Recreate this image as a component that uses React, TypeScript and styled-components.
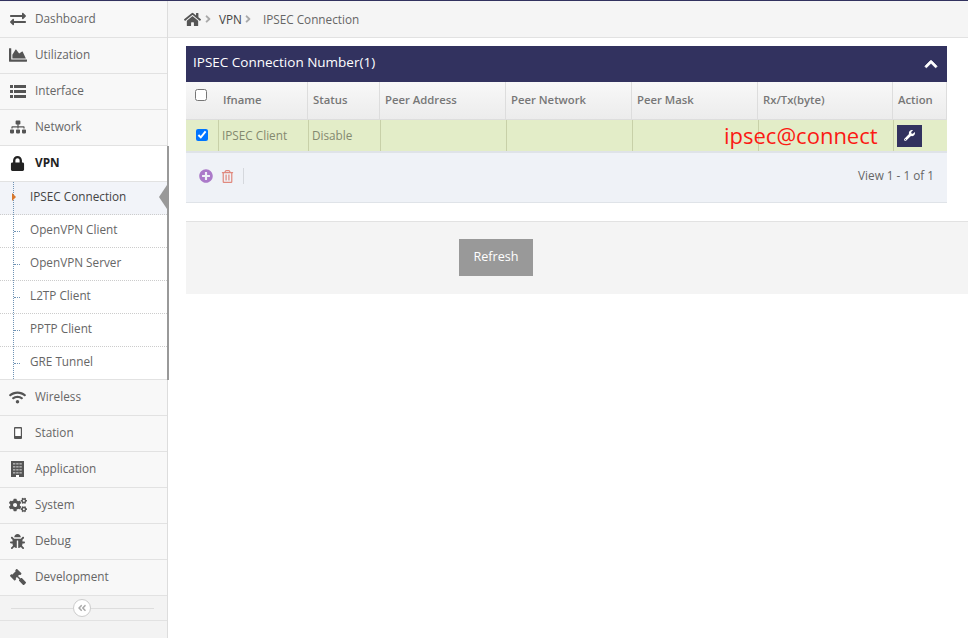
import React from "react";
import styled, { createGlobalStyle } from "styled-components";
import {
  FaExchangeAlt, FaChartArea, FaSitemap, FaLock, FaWifi,
  FaCogs, FaBug, FaGavel, FaHome, FaChevronUp, FaPlusCircle, FaRegTrashAlt, FaWrench,
  FaAngleDoubleLeft, FaAngleRight,
} from "react-icons/fa";

const GlobalStyle = createGlobalStyle`
  html, body { margin: 0; padding: 0; height: 100%; background: #fff; }
  body { font-family: "Open Sans", "Liberation Sans", sans-serif; font-size: 11.75px; color: #555; overflow: hidden; }
`;

const Page = styled.div`
  display: flex;
  height: 638px;
  border-top: 1px solid #32325f;
  box-sizing: border-box;
`;

const Sidebar = styled.aside`
  width: 168px;
  flex: none;
  padding-top: 1px;
  background: #f3f3f3;
  border-right: 1px solid #ddd;
  box-sizing: border-box;
`;

const NavItem = styled.div<{ $active?: boolean }>`
  display: flex;
  align-items: center;
  height: 36px;
  box-sizing: border-box;
  border-bottom: 1px solid #e2e2e2;
  padding-bottom: 3px;
  background: ${(p) => (p.$active ? "#fff" : "#f8f8f8")};
  color: ${(p) => (p.$active ? "#222" : "#666")};
  font-weight: ${(p) => (p.$active ? 700 : 400)};
`;

const NavIcon = styled.span<{ $active?: boolean; $size?: number }>`
  width: 35px;
  flex: none;
  display: flex;
  justify-content: center;
  margin-top: 2px;
  font-size: ${(p) => p.$size ?? 16}px;
  color: ${(p) => (p.$active ? "#222" : "#555")};
`;

const GavelIcon = styled(FaGavel)`
  transform: scaleX(-1);
`;

const VpnGroup = styled.div`
  margin-right: -2px;
  border-right: 2px solid #999;
  position: relative;
  z-index: 1;
`;

const SubMenu = styled.div`
  position: relative;
  border-bottom: 1px solid #e2e2e2;
  &::before {
    content: "";
    position: absolute;
    z-index: 1;
    left: 13px;
    top: 0;
    bottom: 0;
    border-left: 1px dotted #6f93b5;
  }
`;

const SubItem = styled.div<{ $active?: boolean }>`
  position: relative;
  height: 33px;
  box-sizing: border-box;
  display: flex;
  align-items: center;
  padding: 0 0 4px 30px;
  border-bottom: 1px dotted #ccc;
  background: ${(p) => (p.$active ? "#f2f4f9" : "#fff")};
  color: ${(p) => (p.$active ? "#444" : "#666")};
  &:last-child { border-bottom: 0; height: 32px; }
  &::before {
    content: "";
    position: absolute;
    left: 14px;
    top: 50%;
    width: 6px;
    border-top: 1px dotted #6f93b5;
    display: ${(p) => (p.$active ? "none" : "block")};
  }
`;

const ActiveCaret = styled.span`
  position: absolute;
  z-index: 2;
  left: 12px;
  top: 11px;
  border-left: 4px solid #d9782d;
  border-top: 4px solid transparent;
  border-bottom: 4px solid transparent;
`;

const ActiveNotch = styled.span`
  position: absolute;
  right: 0;
  top: 3px;
  border-right: 8px solid #999;
  border-top: 12px solid transparent;
  border-bottom: 12px solid transparent;
`;

const CollapseBar = styled.div`
  height: 25px;
  box-sizing: border-box;
  border-bottom: 1px solid #e2e2e2;
  display: flex;
  align-items: center;
  justify-content: center;
  padding: 0 13px 0 11px;
  background: #f3f3f3;
  &::before, &::after {
    content: "";
    flex: 1;
    border-top: 1px solid #ddd;
  }
  &::before { flex: 0 0 62px; }
`;

const CollapseButton = styled.span`
  width: 16px;
  height: 16px;
  border: 1px solid #ccc;
  border-radius: 50%;
  background: #fff;
  color: #aaa;
  font-size: 10px;
  display: flex;
  align-items: center;
  justify-content: center;
`;

const Main = styled.main`
  flex: 1;
  min-width: 0;
`;

const Breadcrumb = styled.div`
  height: 37px;
  box-sizing: border-box;
  background: #f5f5f5;
  border-bottom: 1px solid #e2e2e2;
  display: flex;
  align-items: center;
  padding: 0 0 0 16px;
  color: #666;
`;

const HomeIcon = styled(FaHome)`
  font-size: 17px;
  color: #555;
`;

const Crumb = styled.span<{ $strong?: boolean }>`
  color: ${(p) => (p.$strong ? "#444" : "#666")};
`;

const CrumbSep = styled(FaAngleRight)<{ $wide?: boolean }>`
  font-size: 12px;
  color: #aaa;
  margin: 0 ${(p) => (p.$wide ? "9px" : "5px")} 0 ${(p) => (p.$wide ? "0" : "1px")};
`;

const Content = styled.div`
  padding: 8px 21px 0 18px;
`;

const PanelHeader = styled.div`
  height: 36px;
  background: #32325f;
  color: #fff;
  font-size: 13.5px;
  display: flex;
  align-items: center;
  justify-content: space-between;
  padding: 0 9px 4px 7px;
  box-sizing: border-box;
`;

const Collapse = styled(FaChevronUp)`
  font-size: 14px;
  stroke: currentColor;
  stroke-width: 30;
  margin-top: 4px;
`;

const HeadRow = styled.div`
  display: grid;
  grid-template-columns: 32px 90px 72px 126px 126px 126px 135px 54px;
  height: 38px;
  box-sizing: border-box;
  background: linear-gradient(#f8f8f8, #ececec);
  border-bottom: 1px solid #ddd;
  color: #777;
  font-weight: 600;
  font-size: 11.3px;
`;

const HeadCell = styled.div`
  display: flex;
  align-items: center;
  padding: 0 0 2px 5px;
  border-right: 1px solid #ddd;
  box-sizing: border-box;
`;

const BodyRow = styled.div`
  position: relative;
  display: grid;
  grid-template-columns: 33px 90px 72px 126px 126px 126px 135px 53px;
  height: 33px;
  box-sizing: border-box;
  background: #e3edc8;
  border-bottom: 2px solid #dfe3e8;
  color: #83896f;
`;

const BodyCell = styled.div<{ $last?: boolean }>`
  display: flex;
  align-items: center;
  padding: 0 0 2px 3px;
  box-sizing: border-box;
  border-right: ${(p) => (p.$last ? "0" : "1px solid #c8d0a8")};
`;

const ActionCell = styled(BodyCell)`
  padding: 0 0 0 4px;
`;

const RowCheckCell = styled(BodyCell)`
  align-items: flex-start;
  padding: 9px 0 0 10px;
`;

const CheckCell = styled.div`
  display: flex;
  justify-content: center;
  padding: 7px 2px 0 0;
`;

const Check = styled.input`
  width: 12px;
  height: 12px;
  margin: 0;
`;

const Stamp = styled.span`
  position: absolute;
  left: 538px;
  top: 0;
  color: #fb1a14;
  font-size: 22px;
  line-height: 30px;
`;

const ActionButton = styled.span`
  width: 25px;
  height: 22px;
  margin-left: -1px;
  background: #32325f;
  color: #fff;
  font-size: 11px;
  display: flex;
  align-items: center;
  justify-content: center;
`;

const Pager = styled.div`
  height: 50px;
  box-sizing: border-box;
  background: #eff2f7;
  border-bottom: 1px solid #dfe3e8;
  display: flex;
  align-items: flex-start;
  justify-content: space-between;
  padding: 14px 13px 0 13px;
  color: #666;
`;

const PagerTools = styled.div`
  display: flex;
  align-items: center;
  gap: 8px;
  margin-top: 1px;
`;

const AddIcon = styled(FaPlusCircle)`
  font-size: 14px;
  color: #ab7ac9;
`;

const DeleteIcon = styled(FaRegTrashAlt)`
  font-size: 13px;
  color: #e0897e;
`;

const ToolSep = styled.span`
  height: 16px;
  border-left: 1px solid #d5d8dd;
  margin-left: 1px;
`;

const PagerInfo = styled.span`
  line-height: 17px;
`;

const FormFooter = styled.div`
  margin-top: 18px;
  height: 73px;
  box-sizing: border-box;
  background: #f4f4f4;
  border-top: 1px solid #e2e2e2;
  margin-right: -21px;
  padding: 17px 0 0 273px;
`;

const RefreshButton = styled.button`
  width: 74px;
  height: 37px;
  border: 0;
  padding: 0 0 3px;
  background: #999;
  color: #fff;
  font: 12.6px "Open Sans", "Liberation Sans", sans-serif;
`;

const ListGlyph = () => (
  <svg width="16" height="13" viewBox="0 0 16 13" fill="#555">
    <rect x="0" y="0" width="3" height="3" />
    <rect x="4" y="0" width="12" height="3" />
    <rect x="0" y="5" width="3" height="3" />
    <rect x="4" y="5" width="12" height="3" />
    <rect x="0" y="10" width="3" height="3" />
    <rect x="4" y="10" width="12" height="3" />
  </svg>
);

const PhoneGlyph = () => (
  <svg width="8" height="12" viewBox="0 0 8 12">
    <rect x="0" y="0" width="8" height="12" rx="1" fill="#555" />
    <rect x="1.2" y="1.5" width="5.6" height="7.5" fill="#fff" />
  </svg>
);

const BuildingGlyph = () => (
  <svg width="13" height="16" viewBox="0 0 13 16">
    <rect x="0" y="0" width="13" height="16" fill="#555" />
    {[2, 5, 8, 11].map((y) =>
      [2, 5.2, 8.4].map((x) => <rect key={`${x}-${y}`} x={x} y={y} width="2.4" height="1.6" fill="#aaa" />)
    )}
    <rect x="5" y="14" width="3" height="2" fill="#fff" />
  </svg>
);

const topItems = [
  { label: "Dashboard", icon: <FaExchangeAlt />, size: 16 },
  { label: "Utilization", icon: <FaChartArea />, size: 18 },
  { label: "Interface", icon: <ListGlyph />, size: 16 },
  { label: "Network", icon: <FaSitemap />, size: 16 },
];

const bottomItems = [
  { label: "Wireless", icon: <FaWifi />, size: 17 },
  { label: "Station", icon: <PhoneGlyph />, size: 12 },
  { label: "Application", icon: <BuildingGlyph />, size: 16 },
  { label: "System", icon: <FaCogs />, size: 18 },
  { label: "Debug", icon: <FaBug />, size: 15 },
  { label: "Development", icon: <GavelIcon />, size: 16 },
];

const subItems = ["IPSEC Connection", "OpenVPN Client", "OpenVPN Server", "L2TP Client", "PPTP Client", "GRE Tunnel"];
const columns = ["Ifname", "Status", "Peer Address", "Peer Network", "Peer Mask", "Rx/Tx(byte)", "Action"];

export default function App() {
  return (
    <>
      <GlobalStyle />
      <Page>
        <Sidebar>
          {topItems.map((item) => (
            <NavItem key={item.label}>
              <NavIcon $size={item.size}>{item.icon}</NavIcon>
              {item.label}
            </NavItem>
          ))}
          <VpnGroup>
            <NavItem $active>
              <NavIcon $active $size={15}><FaLock /></NavIcon>
              VPN
            </NavItem>
            <SubMenu>
              {subItems.map((label, i) => (
                <SubItem key={label} $active={i === 0}>
                  {i === 0 && <ActiveCaret />}
                  {label}
                  {i === 0 && <ActiveNotch />}
                </SubItem>
              ))}
            </SubMenu>
          </VpnGroup>
          {bottomItems.map((item) => (
            <NavItem key={item.label}>
              <NavIcon $size={item.size}>{item.icon}</NavIcon>
              {item.label}
            </NavItem>
          ))}
          <CollapseBar>
            <CollapseButton><FaAngleDoubleLeft /></CollapseButton>
          </CollapseBar>
        </Sidebar>
        <Main>
          <Breadcrumb>
            <HomeIcon />
            <CrumbSep />
            <Crumb $strong>VPN</Crumb>
            <CrumbSep $wide />
            <Crumb>IPSEC Connection</Crumb>
          </Breadcrumb>
          <Content>
            <PanelHeader>
              IPSEC Connection Number(1)
              <Collapse />
            </PanelHeader>
            <HeadRow>
              <CheckCell><Check type="checkbox" readOnly /></CheckCell>
              {columns.map((c) => <HeadCell key={c}>{c}</HeadCell>)}
            </HeadRow>
            <BodyRow>
              <RowCheckCell><Check type="checkbox" checked readOnly /></RowCheckCell>
              <BodyCell>IPSEC Client</BodyCell>
              <BodyCell>Disable</BodyCell>
              <BodyCell />
              <BodyCell />
              <BodyCell />
              <BodyCell />
              <ActionCell $last><ActionButton><FaWrench /></ActionButton></ActionCell>
              <Stamp>ipsec@connect</Stamp>
            </BodyRow>
            <Pager>
              <PagerTools>
                <AddIcon />
                <DeleteIcon />
                <ToolSep />
              </PagerTools>
              <PagerInfo>View 1 - 1 of 1</PagerInfo>
            </Pager>
            <FormFooter>
              <RefreshButton>Refresh</RefreshButton>
            </FormFooter>
          </Content>
        </Main>
      </Page>
    </>
  );
}
